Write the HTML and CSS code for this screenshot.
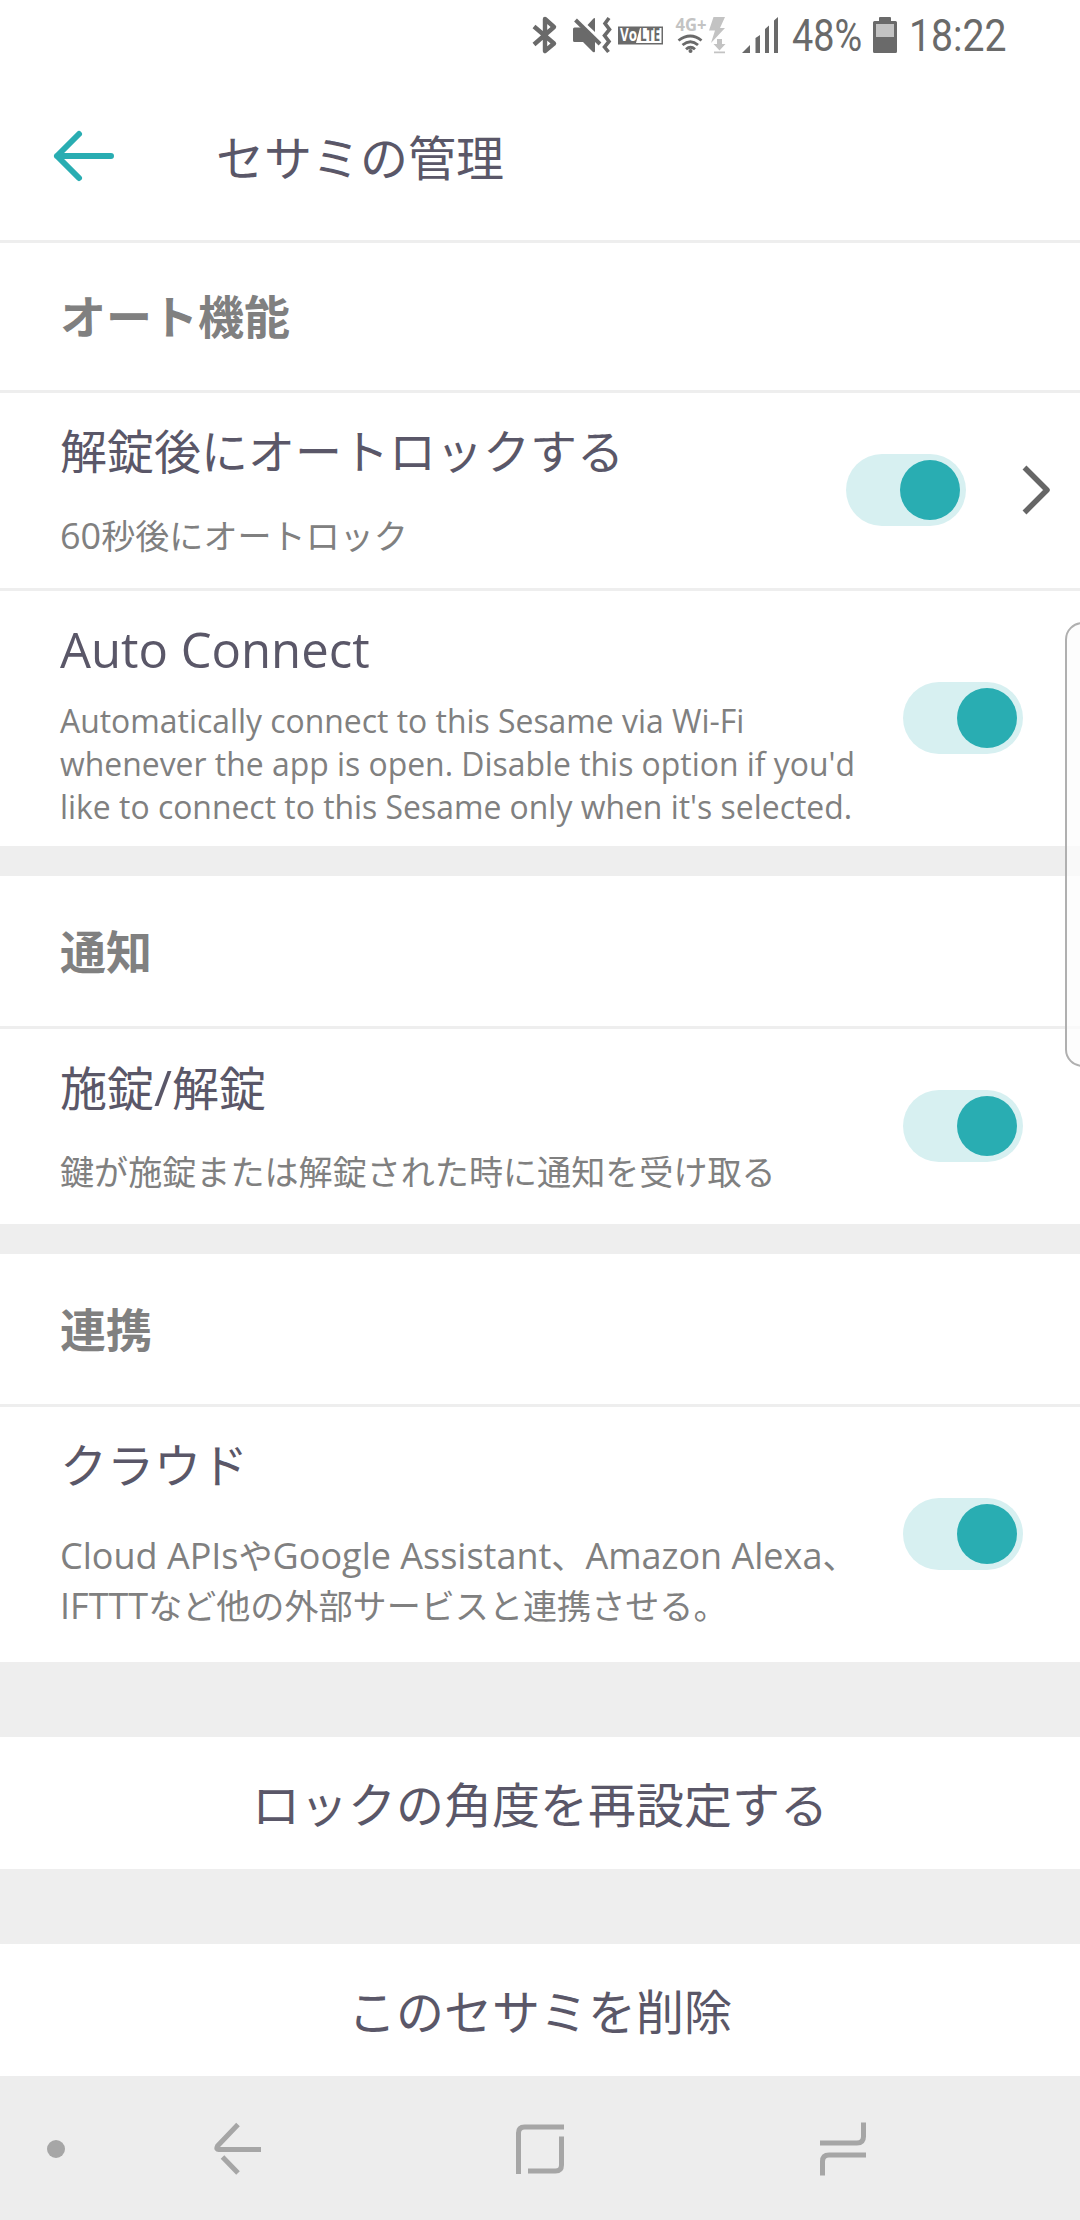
FILE: index.html
```html
<!DOCTYPE html>
<html lang="ja">
<head>
  <meta charset="UTF-8" />
  <title>セサミの管理</title>
  <link rel="stylesheet" href="styles.css">
</head>
<body>
  <div class="status-bar">
    <svg width="24" height="38" viewBox="533 16 24 38" fill="none" stroke="#6a6a6a" stroke-width="4.4" stroke-linejoin="round">
      <path d="M534 26.5L554 43.5L545 51V19L554 27L534 44.5"/>
    </svg>
    <svg class="icon-mute" width="38" height="38" viewBox="573 16 38 38">
      <path d="M573 29q0-1.5 1.5-1.5H582L595 40.500V51q0 2-2 1L583 42H574.500q-1.500 0-1.500-1.500zM587.500 25L593 19q2-2 2 0V32z" fill="#6a6a6a"/>
      <path d="M575.500 20L600 44" fill="none" stroke="#6a6a6a" stroke-width="4"/>
      <path d="M609 18l-4 5.500 4.500 6-5 6 4.500 6-4.500 5.500 4 5" fill="none" stroke="#6a6a6a" stroke-width="3.600"/>
    </svg>
    <svg class="icon-volte" width="46" height="29" viewBox="618 20.500 46 29">
      <rect x="618" y="26" width="45" height="18" fill="#6a6a6a"/>
      <path d="M636 42.500L640 27.500H661.500V42.500z" fill="#fff"/>
      <text x="620" y="40.500" textLength="17" lengthAdjust="spacingAndGlyphs" class="volte" fill="#fff">Vo</text>
      <text x="640" y="40.500" textLength="20" lengthAdjust="spacingAndGlyphs" class="volte" fill="#6a6a6a">LTE</text>
    </svg>
    <svg class="icon-data" width="51" height="46" viewBox="675 12 51 46">
      <text x="675.500" y="31" textLength="31" lengthAdjust="spacingAndGlyphs" class="net" fill="#c3c3c3">4G+</text>
      <g fill="none" stroke="#6a6a6a" stroke-width="2.800">
        <path d="M678.500 40.500q12-9 23 0M682.500 45q8-6.500 15.500 0M686 49.300q4.500-4 9 0"/>
      </g>
      <circle cx="690.500" cy="51" r="2" fill="#6a6a6a"/>
      <path d="M713.500 17H725l-5 11h5L711 43l4-12.500H709zM717 39h5v5h3.500l-6 6.500-6-6.500H717zM714 51.500h11v1.800H714z" fill="#c3c3c3"/>
    </svg>
    <svg class="icon-signal" width="37" height="36" viewBox="742 17 37 36" fill="#6a6a6a">
      <path d="M742 53L750 45V53zM755.500 53V38l4.500-3V53zM765 53V29l4-3.500V53zM774 53V20.500l4-3.500V53z"/>
    </svg>
    <div class="status-text battery-level"><span>48%</span></div>
    <svg class="icon-battery" width="24" height="36" viewBox="873 17 24 36">
      <path d="M879 21v-3q0-1 1-1h10q1 0 1 1v3h4.500q1.500 0 1.500 1.500v29q0 1.500-1.500 1.500h-21q-1.500 0-1.500-1.500v-29q0-1.500 1.500-1.500z" fill="#6a6a6a"/>
      <path d="M876 24h18v13h-18z" fill="#c3c3c3"/>
    </svg>
    <div class="status-text clock"><span>18:22</span></div>
  </div>

  <header class="app-bar">
    <svg width="60" height="50" viewBox="54 131 60 50" fill="none" stroke="#29adb2" stroke-width="6" stroke-linecap="round" stroke-linejoin="round">
      <path d="M79 134L57 156L79 178M57 156H111"/>
    </svg>
    <h1>セサミの管理</h1>
  </header>

  <section class="group">
    <h2>オート機能</h2>
    <div class="row">
      <div class="row-text">
        <div class="row-title">解錠後にオートロックする</div>
        <div class="row-sub"><span class="latin">60</span>秒後にオートロック</div>
      </div>
      <div class="toggle"></div>
      <svg class="chevron" width="27" height="48" viewBox="0 0 27 48" fill="none" stroke="#666" stroke-width="5.500" stroke-linejoin="round">
        <path d="M1.500 1.500L24 24L1.500 46.500"/>
      </svg>
    </div>
    <div class="row row-tall">
      <div class="row-text">
        <div class="row-title"><span class="latin">Auto Connect</span></div>
        <div class="row-desc">Automatically connect to this Sesame via Wi-Fi<br>whenever the app is open. Disable this option if you'd<br>like to connect to this Sesame only when it's selected.</div>
      </div>
      <div class="toggle"></div>
    </div>
  </section>

  <section class="group">
    <h2>通知</h2>
    <div class="row">
      <div class="row-text">
        <div class="row-title">施錠<span class="latin">/</span>解錠</div>
        <div class="row-sub">鍵が施錠または解錠された時に通知を受け取る</div>
      </div>
      <div class="toggle"></div>
    </div>
  </section>

  <section class="group">
    <h2>連携</h2>
    <div class="row row-tall">
      <div class="row-text">
        <div class="row-title">クラウド</div>
        <div class="row-sub row-sub-wrap"><span class="latin">Cloud APIs</span>や<span class="latin">Google Assistant</span>、<span class="latin">Amazon Alexa</span>、<br><span class="latin">IFTTT</span>など他の外部サービスと連携させる。</div>
      </div>
      <div class="toggle"></div>
    </div>
  </section>

  <div class="action">ロックの角度を再設定する</div>
  <div class="action">このセサミを削除</div>

  <nav class="nav-bar">
    <span class="nav-dot"></span>
    <svg class="nav-back" width="46" height="60" viewBox="215 2119 46 60">
      <path d="M238 2124.500L217.500 2146q-2 4 2 3.500H261M222.500 2157L238 2173"/>
    </svg>
    <svg class="nav-home" width="48" height="60" viewBox="516 2119 48 60">
      <path d="M518.500 2174V2133q0-6 6-6H564M561.500 2136.500V2165q0 6-6 6H528"/>
    </svg>
    <svg class="nav-recent" width="46" height="60" viewBox="820 2119 46 60">
      <path d="M820 2143H857q6.500 0 6.500-6.500V2122.500M866 2155H829q-6.500 0-6.500 6.500V2175.500"/>
    </svg>
  </nav>

  <div class="edge-panel"></div>
</body>
</html>
```
FILE: styles.css
```css
* {
  box-sizing: border-box;
}
body {
  margin: 0;
  width: 1080px;
  height: 2220px;
  position: relative;
  overflow: hidden;
  background: #eee;
  color: #5a5768;
  font-family: "Open Sans", "Noto Sans CJK JP", sans-serif;
}
svg {
  display: block;
  flex: none;
  overflow: visible;
}
.status-bar {
  display: flex;
  align-items: center;
  height: 72px;
  padding: 0 0 2px 533px;
  background: #fff;
}
.icon-mute {
  margin-left: 16px;
}
.icon-volte {
  margin-left: 7px;
}
.icon-data {
  margin-left: 11px;
}
.icon-signal {
  margin-left: 16px;
}
.status-text {
  color: #6a6a6a;
  font-family: Roboto, sans-serif;
  font-size: 45px;
  line-height: 60px;
  white-space: nowrap;
}
.status-text span {
  display: inline-block;
  transform: scaleX(0.87);
  transform-origin: 0 50%;
}
.battery-level {
  width: 73px;
  margin: 2px 0 0 13px;
}
.battery-level span {
  transform: scaleX(0.84);
}
.icon-battery {
  margin-left: 8px;
}
.clock {
  width: 102px;
  margin: 2px 0 0 12px;
}
.volte {
  font-size: 17px;
  font-weight: 700;
}
.net {
  font-size: 17px;
  font-weight: 700;
}
.app-bar {
  display: flex;
  align-items: center;
  height: 171px;
  padding: 0 0 0 54px;
  border-bottom: 3px solid #eee;
  background: #fff;
}
h1 {
  margin: 4px 0 0 102px;
  font-size: 48px;
  line-height: 60px;
  font-weight: 400;
}
.group {
  margin-bottom: 30px;
  background: #fff;
}
h2 {
  height: 150px;
  margin: 0;
  padding-left: 60px;
  font-size: 46px;
  line-height: 150px;
  font-weight: 700;
  color: #808080;
}
.row {
  display: flex;
  align-items: center;
  height: 198px;
  padding: 0 57px 2px 60px;
  border-top: 3px solid #eee;
}
.row-tall {
  height: 258px;
}
.row-text {
  flex: 1;
  align-self: stretch;
  white-space: nowrap;
}
.row-title {
  margin-top: 25px;
  font-size: 47px;
  line-height: 66px;
}
.row-title .latin {
  font-size: 49px;
}
.row-sub {
  margin-top: 27px;
  font-size: 34.1px;
  line-height: 49px;
  color: #808080;
}
.row-sub-wrap {
  margin-top: 33px;
}
.row-sub .latin {
  font-size: 36px;
}
.row-desc {
  margin-top: 16px;
  font-size: 31.9px;
  line-height: 43px;
  color: #808080;
}
.toggle {
  display: flex;
  justify-content: flex-end;
  width: 120px;
  height: 72px;
  padding: 6px;
  border-radius: 36px;
  background: #d7f0f1;
}
.toggle::before {
  content: "";
  width: 60px;
  height: 60px;
  border-radius: 50%;
  background: #29adb2;
}
.chevron {
  margin: 0 -27px 0 57px;
}
.group:first-of-type h2 {
  height: 147px;
  line-height: 146px;
}
.action {
  height: 132px;
  margin-top: 75px;
  background: #fff;
  font-size: 48px;
  line-height: 136px;
  text-align: center;
}
.nav-bar {
  display: flex;
  align-items: center;
  height: 144px;
  padding: 2px 0 0 47px;
  background: #ededed;
}
.nav-bar path {
  fill: none;
  stroke: #a6a6a6;
  stroke-width: 5;
}
.nav-dot {
  width: 18px;
  height: 18px;
  border-radius: 50%;
  background: #a6a6a6;
}
.nav-back {
  margin-left: 150px;
}
.nav-home {
  margin-left: 255px;
}
.nav-recent {
  margin-left: 256px;
}
/* edge panel handle, sits over the page at the right */
.edge-panel {
  position: absolute;
  top: 622px;
  right: -20px;
  width: 35px;
  height: 445px;
  border: 2px solid #b0b0b0;
  border-radius: 24px;
  background: rgba(252, 252, 252, 0.75);
}
```
